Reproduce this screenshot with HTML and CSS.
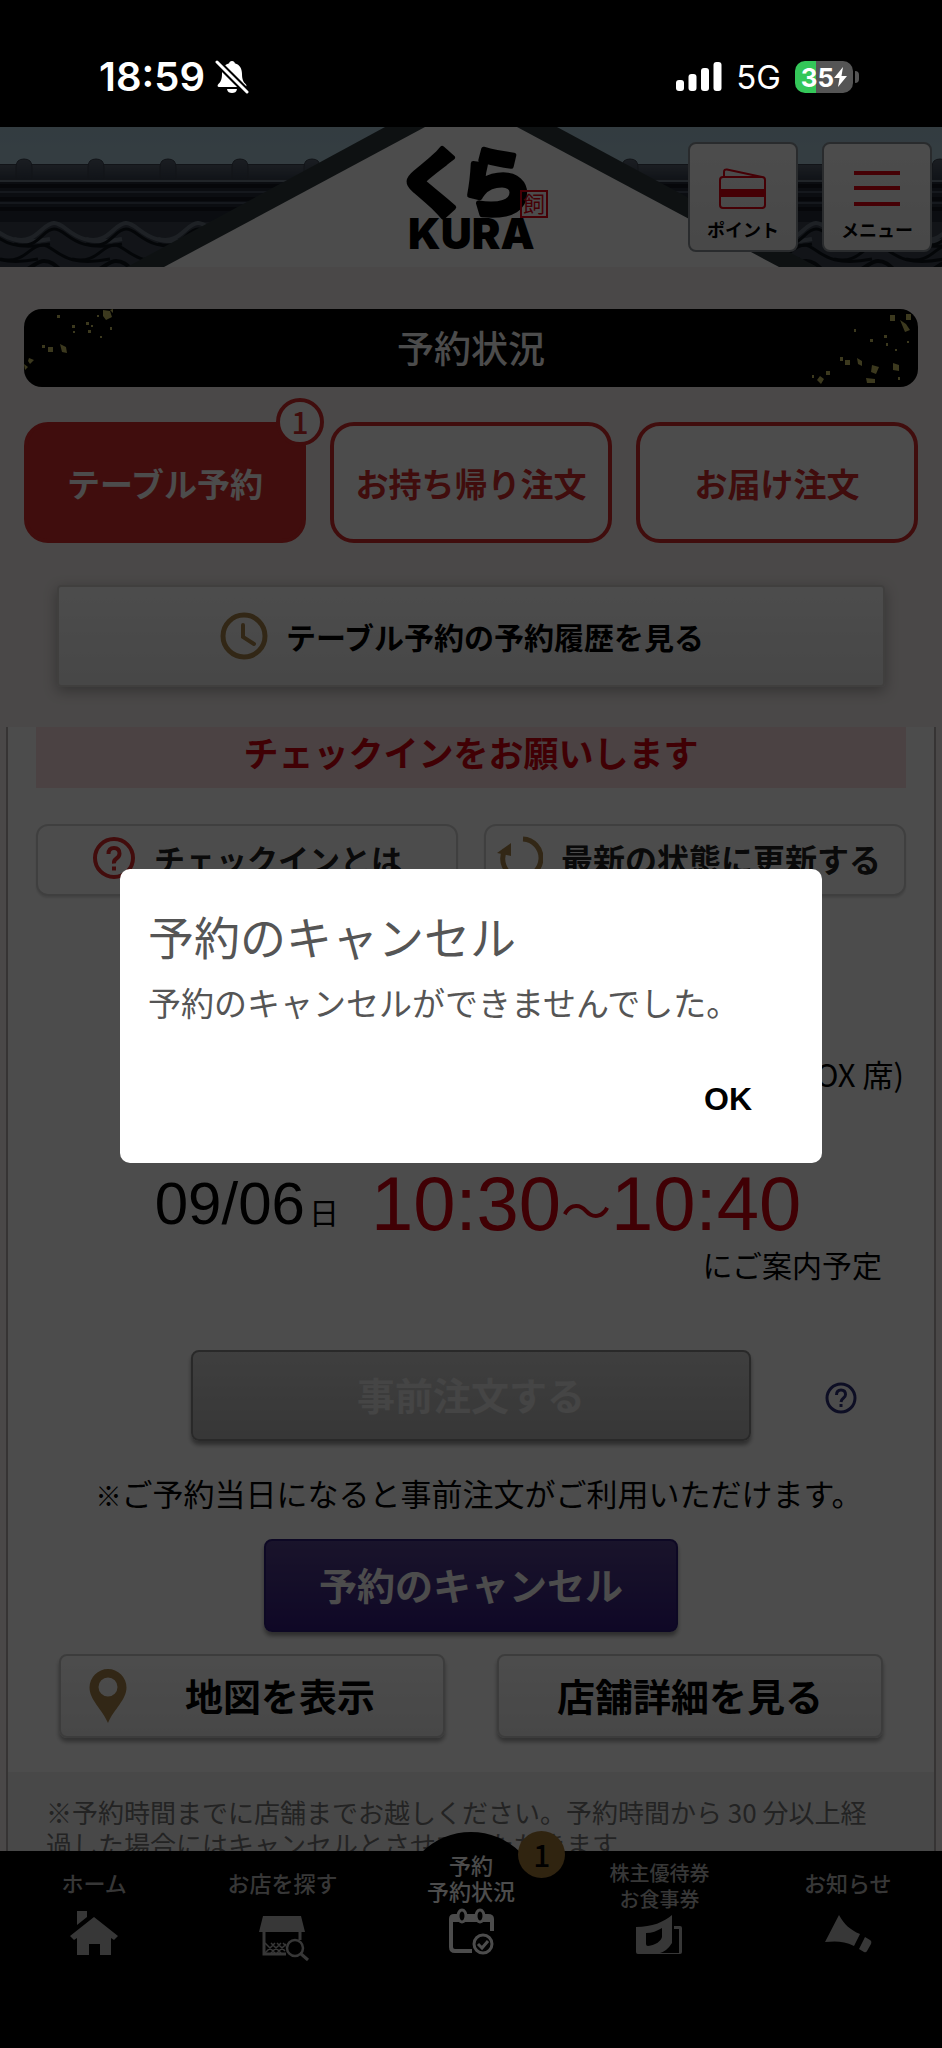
FILE: index.html
```html
<!DOCTYPE html>
<html lang="ja">
<head>
  <meta charset="UTF-8">
  <title>予約状況</title>
  <meta name="viewport" content="width=device-width, initial-scale=1.0">
  <link rel="stylesheet" href="styles.css">
</head>
<body>
  <div class="app">
    <div class="status">
      <div class="status-side">
        <span class="clock">18:59</span>
        <svg width="34" height="34" viewBox="0 0 34 34">
          <path d="M17 1c1.800 0 2.600 1 2.800 2.200C25 4.500 27 9 27 14c0 6 1.500 8 4 10.500.8 1 .4 2.500-1 2.500H4c-1.400 0-1.800-1.500-1-2.500C5.500 22 7 20 7 14c0-5 2-9.500 7.200-10.800C14.400 2 15.200 1 17 1z" fill="#fff"/>
          <path d="M12 29h10c-.5 3-2.500 4-5 4s-4.500-1-5-4z" fill="#fff"/>
          <path d="M2 2L32 32" stroke="#000" stroke-width="7"/>
          <path d="M2 2L32 32" stroke="#fff" stroke-width="3" stroke-linecap="round"/>
        </svg>
      </div>
      <div class="status-side">
        <svg width="46" height="30" viewBox="0 0 46 30" fill="#fff">
          <rect x="0" y="18" width="8" height="11" rx="3"/>
          <rect x="12.500" y="12" width="8" height="17" rx="3"/>
          <rect x="25" y="6" width="8" height="23" rx="3"/>
          <rect x="37.500" y="0" width="8" height="29" rx="3"/>
        </svg>
        <span class="network">5G</span>
        <div class="battery">
          <span>35</span>
          <svg width="13" height="20" viewBox="0 0 13 20"><path d="M9 0L0 11h5.500L4 20l9-11H7.500z" fill="#fff"/></svg>
        </div>
      </div>
    </div>

    <header class="header">
      <svg class="roof" viewBox="0 0 942 140" preserveAspectRatio="xMidYMin slice">
        <defs>
          <linearGradient id="sky" x1="0" y1="0" x2="0" y2="1">
            <stop offset="0" stop-color="#aac8d8"/>
            <stop offset="1" stop-color="#c2dde2"/>
          </linearGradient>
          <linearGradient id="tile" x1="0" y1="0" x2="0" y2="1">
            <stop offset="0" stop-color="#5a6472"/>
            <stop offset="1" stop-color="#394352"/>
          </linearGradient>
          <g id="ridge">
            <path d="M-8 52V40q0-8 8-8t8 8v12z" fill="url(#tile)" stroke="#3a424e"/>
          </g>
          <g id="wave" fill="none">
            <path d="M-36 112C-14 118 -8 96 4 96C18 96 22 122 72 112" stroke="#66717e" stroke-width="4"/>
            <path d="M-36 117C-12 124 -8 102 4 102C18 102 22 127 72 117" stroke="#10151d" stroke-width="3"/>
            <path d="M-50 132C-26 138 -20 118 -8 118C6 118 10 142 60 132" stroke="#10151d" stroke-width="3"/>
            <path d="M-30 145C-18 142 -14 134 -6 134C4 134 8 142 14 146" stroke="#10151d" stroke-width="4"/>
          </g>
        </defs>
        <rect width="942" height="140" fill="url(#sky)"/>
        <rect y="37" width="942" height="103" fill="#3c4552"/>
        <rect y="38" width="942" height="14" fill="url(#tile)"/>
        <rect y="53" width="942" height="42" fill="#252d3a"/>
        <path d="M0 54h942" stroke="#717c8b" stroke-width="2"/>
        <path d="M0 65h942M0 76h942" stroke="#485363" stroke-width="2"/>
        <path d="M0 59h942M0 72h942M0 82h942" stroke="#141a24" stroke-width="4"/>
        <use href="#ridge" x="24"/><use href="#ridge" x="96"/><use href="#ridge" x="168"/><use href="#ridge" x="240"/><use href="#ridge" x="312"/>
        <use href="#ridge" x="630"/><use href="#ridge" x="940"/>
        <use href="#wave" x="-22"/><use href="#wave" x="50"/><use href="#wave" x="122"/><use href="#wave" x="194"/>
        <use href="#wave" x="740"/><use href="#wave" x="812"/><use href="#wave" x="884"/><use href="#wave" x="956"/>
        <path d="M385 0H557L817 140H127z" fill="#303b3e"/>
        <path d="M425 0H517L779 140H164z" fill="#fff"/>
      </svg>
      <div></div>
      <svg class="logo" width="144" height="108" viewBox="0 0 144 108" role="img" aria-label="くら KURA">
        <text class="logo-kana" x="-2" y="67">く</text>
        <text class="logo-kana" x="60" y="67">ら</text>
        <text class="logo-name" x="9" y="106">KURA</text>
        <rect x="122" y="48" width="26" height="26" fill="none" stroke="#e60012" stroke-width="2"/>
        <text class="logo-seal" x="124" y="69">飼</text>
      </svg>
      <div class="header-buttons">
        <button class="header-btn">
          <svg width="48" height="42" viewBox="0 0 48 42" fill="none" stroke="#e60012" stroke-width="2">
            <rect x="1" y="9" width="45" height="31" rx="3"/>
            <path d="M5 9V4q0-3 3-2.500L43 9"/>
            <path d="M1 25h45" stroke-width="8"/>
          </svg>
          <span>ポイント</span>
        </button>
        <button class="header-btn">
          <svg width="48" height="42" viewBox="0 0 48 42" stroke="#e60012" stroke-width="4"><path d="M1 5h46M1 20h46M1 36h46"/></svg>
          <span>メニュー</span>
        </button>
      </div>
    </header>

    <main class="main">
      <div class="title">
        <svg class="specks" width="110" height="78" viewBox="0 0 110 78" fill="#c8be64">
          <path d="M79 1l7 1 2 6-6 3-3-4zM86 1l3-1v4zM24 38h5v5h-5zM36 35l6 3 1 6-5-1zM5 49l5 2-4 4-2-3zM0 55l4 3-3 3zM33 6h3v3h-3zM48 16h3v3h-3zM49 22h2v2h-2zM62 13h3v3h-3zM67 16h2v2h-2zM64 21h3v3h-3zM73 6h2v2h-2zM86 18h2v3h-2zM76 27h2v2h-2zM18 36h3v3h-3z"/>
        </svg>
        <h1>予約状況</h1>
        <svg class="specks" width="110" height="78" viewBox="0 0 110 78" fill="#c8be64">
          <path d="M82 6h5v6h-5zM98 5h5v6h-5zM92 11l6 4 4 6-5 2zM46 20h2v3h-2zM62 30h3v3h-3zM76 26h3v3h-3zM78 34h2v3h-2zM87 40h2v2h-2zM99 32h2v2h-2zM32 48h3v4h-3zM37 51h5v5h-5zM49 49l5 3v5l-4-2zM64 56l7 2-3 7-5-2zM85 54l6 2v6l-6-1zM18 62h4v4h-4zM4 66h2v3h-2zM12 67l4 3-3 5-4-4zM58 69l9 1v4h-8zM90 68h2v3h-2zM104 1l4 2-1 3z"/>
        </svg>
      </div>

      <nav class="tabs">
        <button class="tab active">テーブル予約<span class="tab-badge">1</span></button>
        <button class="tab">お持ち帰り注文</button>
        <button class="tab">お届け注文</button>
      </nav>

      <button class="history">
        <svg width="48" height="48" viewBox="0 0 48 48" fill="none" stroke="#a8844a" stroke-width="5" stroke-linecap="round">
          <circle cx="24" cy="24" r="21"/><path d="M23 13v12l11 7" stroke-width="4"/>
        </svg>
        テーブル予約の予約履歴を見る
      </button>

      <section class="card">
        <p class="notice">チェックインをお願いします</p>
        <div class="checkin">
          <button class="outline-btn">
            <svg width="44" height="44" viewBox="0 0 44 44" fill="none" stroke="#dc2a2a" stroke-width="4">
              <circle cx="22" cy="22" r="19"/>
              <path d="M16.500 18q0-6 5.500-6t5.500 5.500q0 3-3 5t-2.500 5"/><path d="M20 30.500h4v4h-4z" fill="#dc2a2a" stroke="none"/>
            </svg>
            チェックインとは
          </button>
          <button class="outline-btn">
            <svg width="46" height="44" viewBox="0 0 46 44" fill="none" stroke="#a8844a" stroke-width="5">
              <path d="M26 3a19 19 0 0 1-2 38M19 41A19 19 0 0 1 8 14"/>
              <path d="M0 17L14 7v13z" fill="#a8844a" stroke="none"/>
            </svg>
            最新の状態に更新する
          </button>
        </div>

        <p class="seat">（BOX 席)</p>
        <p class="when">
          <span class="date">09/06<small>日</small></span>
          <span class="time">10:30<small>～</small>10:40</span>
        </p>
        <p class="guide">にご案内予定</p>

        <div class="preorder">
          <button class="btn btn-gray" disabled>事前注文する</button>
          <button class="help" aria-label="ヘルプ">
            <svg width="32" height="32" viewBox="0 0 32 32" fill="none" stroke="#2e2f7a" stroke-width="3">
              <circle cx="16" cy="16" r="14"/>
              <path d="M11.500 13q0-5 4.500-5t4.500 4.500q0 2-2 3.500t-2.500 4"/><path d="M14.500 22h3v3h-3z" fill="#2e2f7a" stroke="none"/>
            </svg>
          </button>
        </div>
        <p class="preorder-note"><small>※</small>ご予約当日になると事前注文がご利用いただけます。</p>
        <button class="btn btn-purple">予約のキャンセル</button>

        <div class="shop">
          <button class="shop-btn">
            <svg width="38" height="54" viewBox="0 0 38 54"><path fill-rule="evenodd" d="M19 0a18.500 18.500 0 0 1 18.500 18.500C37.500 31 25 40 19 54 13 40 .5 31 .5 18.500A18.500 18.500 0 0 1 19 0zm0 8.500a9.500 9.500 0 1 0 0 19 9.500 9.500 0 0 0 0-19z" fill="#a8844a"/></svg>
            <span>地図を表示</span>
          </button>
          <button class="shop-btn"><span>店舗詳細を見る</span></button>
        </div>

        <p class="caution">※予約時間までに店舗までお越しください。予約時間から 30 分以上経過した場合にはキャンセルとさせていただきます</p>
      </section>
    </main>

    <nav class="bottom-nav">
      <a href="#" class="nav-item">
        <span class="nav-label">ホーム</span>
        <svg width="50" height="52" viewBox="0 0 50 52" fill="#b8b8b8"><path d="M8 4h10v6l-10 8zM25 10l24 19-4 4-3-2v17H31V37H20v11H8V31l-3 2-4-4z"/></svg>
      </a>
      <a href="#" class="nav-item">
        <span class="nav-label">お店を探す</span>
        <svg width="52" height="56" viewBox="0 0 52 56" fill="none" stroke="#b8b8b8">
          <path d="M6 9h38l4 16H2z" fill="#b8b8b8" stroke="none"/>
          <path d="M7 24v23h22M43 25v8" stroke-width="3"/>
          <path d="M8 36l10 10M14 36l10 10M20 36l8 8M26 36l3 3M18 36L8 46M24 36L14 46M29 37l-9 9" stroke-width="1.500"/>
          <circle cx="38" cy="41" r="8" stroke-width="2.500"/><path d="M43 46l8 7" stroke-width="3"/>
        </svg>
      </a>
      <a href="#" class="nav-item current">
        <span class="nav-label">予約<br>予約状況</span>
        <svg width="48" height="52" viewBox="0 0 48 52" fill="none" stroke="#fff">
          <path d="M25 44H8q-4 0-4-4V12q0-3 3-3h34q4 0 4 3v12" stroke-width="4"/>
          <path d="M3 9h43v6H3z" fill="#fff" stroke="none"/>
          <ellipse cx="15" cy="9" rx="4" ry="6" fill="#000" stroke-width="3"/>
          <ellipse cx="33" cy="9" rx="4" ry="6" fill="#000" stroke-width="3"/>
          <circle cx="36" cy="37" r="9" stroke-width="3"/><path d="M31 37l4 4 6-7" stroke-width="3"/>
        </svg>
        <span class="nav-badge">1</span>
      </a>
      <a href="#" class="nav-item small">
        <span class="nav-label">株主優待券<br>お食事券</span>
        <svg width="50" height="52" viewBox="0 0 50 52" fill="#b8b8b8">
          <path fill-rule="evenodd" d="M2 20C18 20 30 15 38 8v28q-5 8-12 10h19V22h-5v-3h6q2 0 2 2v24q0 2-2 2H4q-2 0-2-2zm10 6v11q0 2 2 2c8-1 13-5 14-9V21c-5 3-10 5-16 5z"/>
        </svg>
      </a>
      <a href="#" class="nav-item">
        <span class="nav-label">お知らせ</span>
        <svg width="50" height="52" viewBox="0 0 50 52" fill="#b8b8b8"><path d="M16 8c5 9 11 15 21 19l-6 12c-10-5-18-5-29-4zM42 30l5 3q2 1 1 4l-4 7q-1 2-3 1l-5-3z"/></svg>
      </a>
    </nav>
  </div>

  <div class="overlay">
    <div class="dialog" role="alertdialog" aria-labelledby="dialogTitle">
      <h2 id="dialogTitle">予約のキャンセル</h2>
      <p>予約のキャンセルができませんでした。</p>
      <button>OK</button>
    </div>
  </div>
</body>
</html>
```
FILE: styles.css
```css
* {
  box-sizing: border-box;
}

body {
  margin: 0;
  background: #000;
  color: #000;
  font-family: "Noto Sans CJK JP", sans-serif;
}

h1, h2, p {
  margin: 0;
}

button {
  font-family: inherit;
  color: inherit;
  padding: 0;
  cursor: pointer;
}

svg {
  display: block;
  flex: none;
}

.app {
  display: flex;
  flex-direction: column;
  height: 100vh;
}

/* status bar stays above the dimmed page */
.status {
  position: relative;
  z-index: 20;
  flex: none;
  display: flex;
  justify-content: space-between;
  height: 127px;
  padding: 27px 89px 0 99px;
  background: #000;
  color: #fff;
  font-family: Inter, sans-serif;
}

.status-side {
  display: flex;
  align-items: center;
  gap: 10px;
}

.clock {
  font-size: 40px;
  font-weight: 600;
  line-height: 40px;
}

.network {
  margin-left: 4px;
  font-size: 33px;
  font-weight: 400;
}

.battery {
  position: relative;
  display: flex;
  align-items: center;
  justify-content: center;
  width: 58px;
  height: 32px;
  margin-left: 4px;
  border-radius: 10px;
  background: linear-gradient(90deg, #34c759 36%, #555 36%);
  font-size: 26px;
  font-weight: 700;
}

.battery::after {
  content: "";
  position: absolute;
  right: -6px;
  top: 10px;
  width: 4px;
  height: 12px;
  border-radius: 0 4px 4px 0;
  background: #555;
}

.header {
  position: relative;
  flex: none;
  display: grid;
  grid-template-columns: 1fr auto 1fr;
  height: 140px;
  overflow: hidden;
}

.roof {
  position: absolute;
  width: 100%;
  height: 100%;
}

.logo {
  position: relative;
  margin-top: 16px;
  overflow: visible;
}

.logo-kana {
  font-size: 74px;
  font-weight: 900;
  stroke: #000;
  stroke-width: 5px;
  stroke-linejoin: round;
}

.logo-name {
  font-family: Inter, sans-serif;
  font-size: 43px;
  font-weight: 900;
}

.logo-seal {
  font-size: 22px;
  fill: #e60012;
}

.header-buttons {
  position: relative;
  display: flex;
  justify-content: flex-end;
  gap: 24px;
  padding: 15px 10px 0 0;
}

.header-btn {
  display: flex;
  flex-direction: column;
  align-items: center;
  gap: 6px;
  width: 110px;
  height: 110px;
  padding-top: 24px;
  border: 2px solid #8a9096;
  border-radius: 8px;
  background: linear-gradient(#fff, #f0f0f0);
  font-size: 18px;
  font-weight: 700;
  line-height: 26px;
}

.main {
  flex: 1;
  min-height: 0;
  display: flex;
  flex-direction: column;
  overflow: hidden;
  background: #f7f1f0;
}

.title {
  flex: none;
  display: flex;
  align-items: center;
  justify-content: space-between;
  height: 78px;
  margin: 42px 24px 0;
  border-radius: 18px;
  overflow: hidden;
  background: #000;
  color: #fff;
}

.title h1 {
  padding-bottom: 2px;
  font-size: 37px;
  font-weight: 500;
  line-height: 54px;
}

.tabs {
  flex: none;
  display: grid;
  grid-template-columns: repeat(3, 1fr);
  gap: 24px;
  margin: 35px 24px 0;
}

.tab {
  position: relative;
  height: 121px;
  border: 4px solid #d82c2c;
  border-radius: 24px;
  background: #fff;
  color: #d82c2c;
  font-size: 33px;
  font-weight: 700;
}

.tab.active {
  background: #d82c2c;
  color: #fff;
}

.tab-badge {
  position: absolute;
  top: -28px;
  right: -22px;
  width: 48px;
  height: 48px;
  border: 4px solid #d82c2c;
  border-radius: 50%;
  background: #fff;
  color: #d82c2c;
  font-size: 30px;
  font-weight: 500;
  line-height: 38px;
}

.history {
  flex: none;
  display: flex;
  align-items: center;
  justify-content: center;
  gap: 18px;
  height: 102px;
  margin: 42px 57px 40px;
  padding-right: 18px;
  border: 2px solid #d6d2d0;
  border-radius: 4px;
  background: linear-gradient(#fff, #ededed);
  box-shadow: 0 4px 14px rgba(0, 0, 0, 0.3);
  font-size: 30px;
  font-weight: 700;
}

.card {
  flex: 1;
  min-height: 0;
  margin: 0 6px;
  border: solid #b5b0b0;
  border-width: 0 2px;
  background: #fff;
  overflow: hidden;
}

.notice {
  margin: 0 28px;
  padding-bottom: 12px;
  background: #fbdde0;
  color: #d7000f;
  font-size: 35px;
  font-weight: 700;
  line-height: 49px;
  text-align: center;
}

.checkin {
  display: grid;
  grid-template-columns: 1fr 1fr;
  gap: 26px;
  margin: 36px 28px 0;
}

.outline-btn {
  display: flex;
  align-items: center;
  justify-content: center;
  gap: 18px;
  height: 72px;
  padding-bottom: 4px;
  border: 2px solid #d4d4d4;
  border-radius: 12px;
  background: #fff;
  box-shadow: 0 2px 2px rgba(0, 0, 0, 0.12);
  color: #222;
  font-size: 31px;
  font-weight: 700;
}

.outline-btn:last-child {
  padding-right: 12px;
  font-size: 32px;
}

.seat {
  margin: 158px 30px 0;
  font-size: 31px;
  line-height: 40px;
  text-align: right;
}

.when {
  display: flex;
  justify-content: center;
  align-items: center;
  gap: 32px;
  padding: 70px 0 0 14px;
  font-family: "Liberation Sans", "Noto Sans CJK JP", sans-serif;
  line-height: 80px;
}

.date {
  font-size: 60px;
}

.date small {
  margin-left: 4px;
  font-size: 30px;
}

.time {
  color: #d7000f;
  font-size: 76px;
}

.time small {
  font-size: 50px;
}

.date small,
.time small {
  line-height: 1;
}

.guide {
  margin-right: 52px;
  font-size: 30px;
  line-height: 40px;
  text-align: right;
}

.preorder {
  display: grid;
  grid-template-columns: 1fr auto 1fr;
  align-items: center;
  justify-items: center;
  margin-top: 66px;
}

.btn {
  display: block;
  padding-bottom: 4px;
  border: 2px solid;
  border-radius: 8px;
  font-size: 38px;
  font-weight: 700;
}

.btn-gray {
  grid-column: 2;
  width: 560px;
  height: 91px;
  border-color: #8a8a8a;
  background: linear-gradient(#d2d2d2, #b8b8b8);
  box-shadow: 0 4px 4px rgba(0, 0, 0, 0.4);
  color: #e6e6e6;
}

.help {
  padding: 4px 4px 0 0;
  border: 0;
  background: none;
}

.preorder-note {
  margin-top: 32px;
  padding-left: 16px;
  font-size: 31px;
  line-height: 40px;
  text-align: center;
}

.preorder-note small {
  font-size: 26px;
  line-height: 1;
}

.btn-purple {
  width: 414px;
  height: 93px;
  margin: 26px auto 0;
  border-color: #2e1c78;
  background: linear-gradient(#55438f, #341b80);
  box-shadow: 0 4px 4px rgba(0, 0, 0, 0.4);
  color: #fff;
}

.shop {
  display: grid;
  grid-template-columns: 1fr 1fr;
  gap: 52px;
  margin: 22px 51px 34px;
}

.shop-btn {
  display: flex;
  align-items: center;
  height: 84px;
  padding: 0 28px;
  border: 2px solid #c8c8c8;
  border-radius: 8px;
  background: linear-gradient(#fff, #eee);
  box-shadow: 0 4px 4px rgba(0, 0, 0, 0.35);
  font-size: 38px;
  font-weight: 700;
}

.shop-btn svg {
  margin-right: 18px;
}

.shop-btn span {
  flex: 1;
  padding-bottom: 4px;
}

.caution {
  padding: 24px 50px 24px 38px;
  background: #f1f1f1;
  color: #777;
  font-size: 26px;
  line-height: 32px;
}

.bottom-nav {
  position: relative;
  flex: none;
  display: grid;
  grid-template-columns: repeat(5, 1fr);
  height: 197px;
  background: #000;
}

.nav-item {
  position: relative;
  display: flex;
  flex-direction: column;
  align-items: center;
  color: #b8b8b8;
  font-size: 22px;
  font-weight: 500;
  line-height: 26px;
  text-align: center;
  text-decoration: none;
}

.nav-label {
  position: relative;
  display: flex;
  align-items: center;
  height: 56px;
  padding-top: 6px;
}

.nav-item.current {
  color: #fff;
}

.current .nav-label {
  padding: 0 0 4px;
}

/* round bump behind the current item */
.current::before {
  content: "";
  position: absolute;
  top: -19px;
  width: 140px;
  height: 140px;
  border-radius: 50%;
  background: #000;
}

.nav-item svg {
  position: relative;
}

.nav-item.small {
  font-size: 20px;
}

.small .nav-label {
  padding-top: 14px;
}

.nav-badge {
  position: absolute;
  top: -20px;
  right: 0;
  width: 47px;
  height: 47px;
  border-radius: 50%;
  background: #a07838;
  color: #000;
  font-size: 30px;
  font-weight: 500;
  line-height: 46px;
}

.overlay {
  position: fixed;
  inset: 0;
  z-index: 10;
  display: flex;
  align-items: center;
  justify-content: center;
  padding: 0 120px 16px;
  background: rgba(0, 0, 0, 0.7);
}

.dialog {
  flex: 1;
  display: flex;
  flex-direction: column;
  padding: 33px 28px 38px;
  border-radius: 10px;
  background: #fff;
  color: #555;
}

.dialog h2 {
  font-size: 46px;
  font-weight: 400;
  line-height: 66px;
}

.dialog p {
  font-size: 33px;
  line-height: 68px;
}

.dialog button {
  align-self: flex-end;
  margin-top: 37px;
  padding: 0 42px;
  border: 0;
  background: none;
  color: #000;
  font-family: "Liberation Sans", Arial, sans-serif;
  font-size: 32px;
  font-weight: 700;
  line-height: 52px;
}
```
